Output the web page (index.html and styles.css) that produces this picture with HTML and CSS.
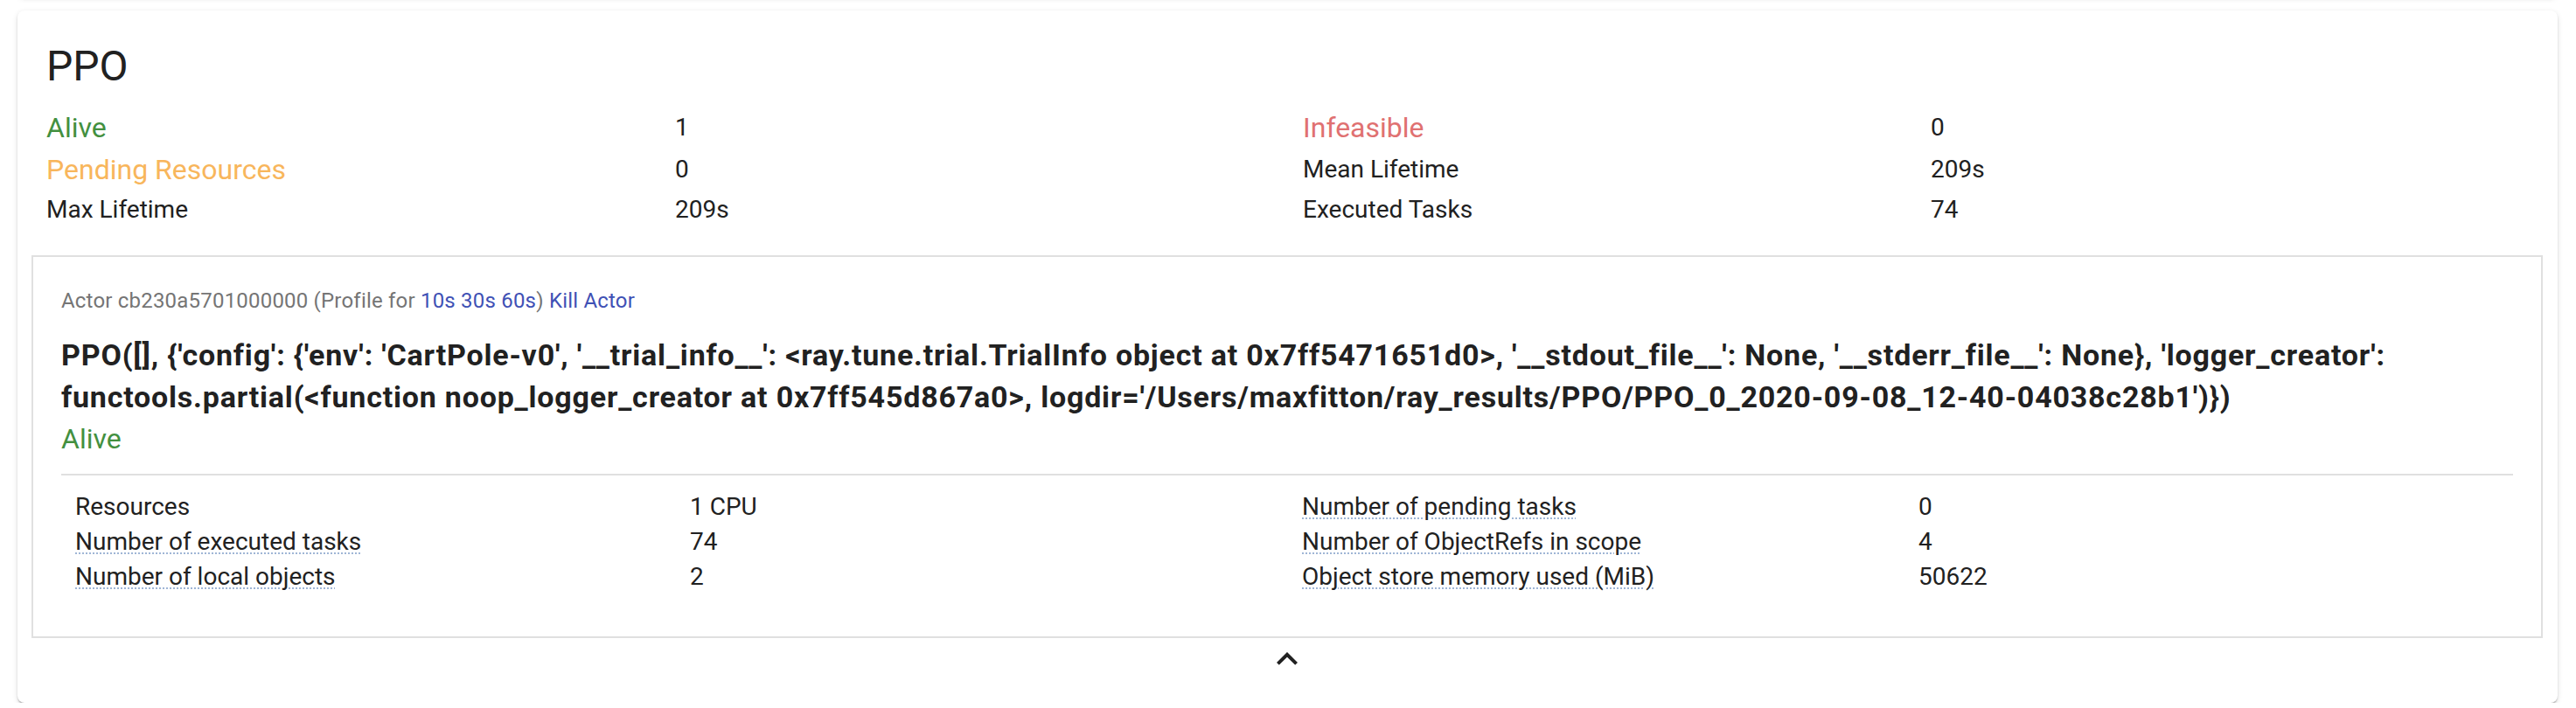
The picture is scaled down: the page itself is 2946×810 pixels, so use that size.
FILE: index.html
```html
<!DOCTYPE html>
<html lang="en">
<head>
<meta charset="utf-8">
<title>PPO</title>
<link rel="stylesheet" href="styles.css">
</head>
<body>
<div class="prev-card"></div>
<div class="card">
  <h2 class="title">PPO</h2>
  <div class="stats">
    <div class="label big alive">Alive</div>
    <div class="value">1</div>
    <div class="label big infeasible">Infeasible</div>
    <div class="value">0</div>

    <div class="label big pending">Pending Resources</div>
    <div class="value">0</div>
    <div class="label">Mean Lifetime</div>
    <div class="value">209s</div>

    <div class="label">Max Lifetime</div>
    <div class="value">209s</div>
    <div class="label">Executed Tasks</div>
    <div class="value">74</div>
  </div>

  <div class="actor">
    <div class="meta">Actor cb230a5701000000 (Profile for <a class="link">10s</a> <a class="link">30s</a> <a class="link">60s</a>) <a class="link">Kill Actor</a></div>
    <div class="repr">PPO([], {'config': {'env': 'CartPole-v0', '__trial_info__': &lt;ray.tune.trial.TrialInfo object at 0x7ff5471651d0&gt;, '__stdout_file__': None, '__stderr_file__': None}, 'logger_creator': functools.partial(&lt;function noop_logger_creator at 0x7ff545d867a0&gt;, logdir='/Users/maxfitton/ray_results/PPO/PPO_0_2020-09-08_12-40-04038c28b1')})</div>
    <div class="state alive">Alive</div>
    <div class="divider"></div>
    <div class="details">
      <div class="dlabel">Resources</div>
      <div class="dvalue">1 CPU</div>
      <div class="dlabel"><span class="hint">Number of pending tasks</span></div>
      <div class="dvalue">0</div>

      <div class="dlabel"><span class="hint">Number of executed tasks</span></div>
      <div class="dvalue">74</div>
      <div class="dlabel"><span class="hint">Number of ObjectRefs in scope</span></div>
      <div class="dvalue">4</div>

      <div class="dlabel"><span class="hint">Number of local objects</span></div>
      <div class="dvalue">2</div>
      <div class="dlabel"><span class="hint">Object store memory used (MiB)</span></div>
      <div class="dvalue">50622</div>
    </div>
  </div>

  <div class="expand">
    <svg class="chev" width="48" height="48" viewBox="0 0 24 24" aria-hidden="true"><path d="M12 8l-6 6 1.41 1.41L12 10.83l4.59 4.58L18 14z" fill="#212121"/></svg>
  </div>
</div>
</body>
</html>
```
FILE: styles.css
```css
html, body {
  margin: 0;
  padding: 0;
  background: #ffffff;
}

body {
  font-family: Roboto, "Liberation Sans", Arial, sans-serif;
  color: #212121;
  overflow: hidden;
}

.prev-card {
  height: 40px;
  margin: -43px 21px 0 20px;
  background: #fff;
  border-radius: 8px;
  box-shadow: 0 4px 2px -2px rgba(0,0,0,0.12), 0 2px 2px 0 rgba(0,0,0,0.08), 0 2px 6px 0 rgba(0,0,0,0.08);
}

.card {
  margin: 15px 21px 0 20px;
  background: #fff;
  border-radius: 8px;
  padding: 32px 17px 26px 16px;
  box-shadow: 0 4px 2px -2px rgba(0,0,0,0.2), 0 2px 2px 0 rgba(0,0,0,0.14), 0 2px 6px 0 rgba(0,0,0,0.12);
}

.title {
  margin: 0 0 0 17px;
  font-size: 48px;
  line-height: 64px;
  font-weight: 400;
  color: #212121;
}

.stats {
  margin-top: 14px;
  padding-left: 17px;
  display: grid;
  grid-template-columns: 719px 718px 718px auto;
  align-items: center;
}

.label {
  font-size: 28px;
  line-height: 44px;
}

.label.big {
  font-size: 32px;
  line-height: 48px;
}

.value {
  font-size: 28px;
  line-height: 40px;
}

.alive { color: #43903f; }
.pending { color: #f8b65c; }
.infeasible { color: #e07171; }

.actor {
  margin-top: 30px;
  border: 2px solid #e0e0e0;
  padding: 30px 32px 48px 32px;
}

.meta {
  font-size: 24px;
  line-height: 40px;
  color: #757575;
  letter-spacing: 0.2px;
}

.link {
  color: #3f51b5;
  text-decoration: none;
  cursor: pointer;
}

.repr {
  margin-top: 18px;
  font-size: 34px;
  line-height: 48px;
  font-weight: 700;
  letter-spacing: 0.8px;
  color: #212121;
}

.state {
  font-size: 32px;
  line-height: 48px;
}

.divider {
  margin-top: 16px;
  height: 2px;
  background: #e0e0e0;
}

.details {
  padding: 16px 16px 0 16px;
  display: grid;
  grid-template-columns: 703px 700px 705px auto;
  font-size: 28px;
  line-height: 40px;
  color: #212121;
}

.hint {
  text-decoration-line: underline;
  text-decoration-style: dotted;
  text-decoration-color: #9fb5d6;
  text-decoration-thickness: 2px;
  text-underline-offset: 3px;
}

.expand {
  display: flex;
  justify-content: center;
}

.chev {
  display: block;
}
```
